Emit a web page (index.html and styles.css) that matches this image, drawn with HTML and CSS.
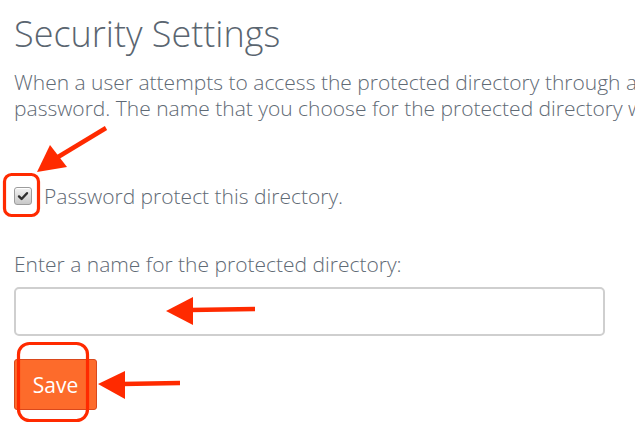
FILE: index.html
```html
<!DOCTYPE html>
<html lang="en">
<head>
<meta charset="utf-8">
<title>Security Settings</title>
<link rel="stylesheet" href="styles.css">
</head>
<body>
<main class="page">
  <h1 class="title">Security Settings</h1>
  <p class="intro">When a user attempts to access the protected directory through a<br>password. The name that you choose for the protected directory will</p>
  <label class="check-row">
    <span class="checkbox">
      <svg width="12" height="12" viewBox="0 0 12 12"><path d="M2 6.4 L4.6 9 L10 3.2" fill="none" stroke="#2e2e2e" stroke-width="2.4" stroke-linecap="round" stroke-linejoin="round"/></svg>
    </span>
    <span>Password protect this directory.</span>
  </label>
  <div class="field">
    <label class="field-label">Enter a name for the protected directory:</label>
    <div class="input"></div>
  </div>
  <button class="save" type="button">Save</button>
</main>
<svg class="annotations" width="635" height="438" viewBox="0 0 635 438">
  <g fill="none" stroke="#ff2a00" stroke-width="3.2">
    <rect x="4.5" y="174.5" width="34" height="41" rx="7"/>
    <rect x="18.5" y="343.5" width="69" height="77" rx="11"/>
  </g>
  <g stroke="#ff2a00" stroke-width="4.5" stroke-linecap="butt">
    <line x1="106" y1="128" x2="58" y2="157"/>
    <line x1="255" y1="309" x2="190" y2="310"/>
    <line x1="180" y1="383" x2="122" y2="384"/>
  </g>
  <g fill="#ff2a00">
    <polygon points="37,172 50,145 67,167"/>
    <polygon points="166,311 193,297 193,325"/>
    <polygon points="98,384 125,371 125,399"/>
  </g>
</svg>
</body>
</html>
```
FILE: styles.css
```css
html, body {
  margin: 0;
  padding: 0;
  background: #ffffff;
  overflow: hidden;
}

body {
  width: 635px;
  height: 438px;
  position: relative;
  font-family: "Open Sans", "Liberation Sans", sans-serif;
  color: #5f6a75;
}

.page {
  padding: 12px 0 0 14px;
  display: flex;
  flex-direction: column;
  align-items: flex-start;
}

.title {
  margin: 0;
  font-size: 36px;
  font-weight: 300;
  line-height: 43px;
  color: #5a6570;
}

.intro {
  margin: 14px 0 0;
  font-size: 21px;
  font-weight: 300;
  line-height: 26px;
  white-space: nowrap;
}

.check-row {
  margin-top: 61px;
  display: flex;
  align-items: center;
  gap: 12px;
  font-size: 21px;
  font-weight: 300;
  line-height: 28px;
}

.checkbox {
  width: 16px;
  height: 16px;
  border: 1px solid #9c9c9c;
  border-radius: 3px;
  background: linear-gradient(#f2f2f2, #c8c8c8);
  display: flex;
  align-items: center;
  justify-content: center;
  box-shadow: inset 0 1px 0 #ffffff;
}

.field {
  margin-top: 40px;
  display: flex;
  flex-direction: column;
  gap: 9px;
}

.field-label {
  font-size: 21px;
  font-weight: 300;
  line-height: 28px;
}

.input {
  width: 587px;
  height: 45px;
  border: 2px solid #cfcfcf;
  border-radius: 5px;
  background: #fff;
}

.save {
  margin-top: 23px;
  width: 83px;
  height: 51px;
  padding: 0;
  border: 1px solid #d9481c;
  border-radius: 3px;
  background: #fd6b2b;
  color: #ffffff;
  font-family: "Open Sans", "Liberation Sans", sans-serif;
  font-size: 21px;
  font-weight: 400;
}

.annotations {
  position: absolute;
  left: 0;
  top: 0;
  pointer-events: none;
}
```
